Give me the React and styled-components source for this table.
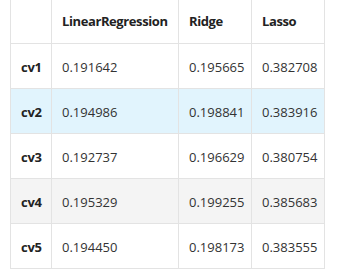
import React from 'react';
import styled, { createGlobalStyle } from 'styled-components';

const GlobalStyle = createGlobalStyle`
    html, body {
        margin: 0;
        padding: 0;
        background: #ffffff;
    }
    body {
        font-family: "Open Sans", "Noto Sans", sans-serif;
        color: #333333;
    }
`;

const columns = ['LinearRegression', 'Ridge', 'Lasso'];

const rows = [
    { name: 'cv1', values: ['0.191642', '0.195665', '0.382708'] },
    { name: 'cv2', values: ['0.194986', '0.198841', '0.383916'], tone: 'hover' },
    { name: 'cv3', values: ['0.192737', '0.196629', '0.380754'] },
    { name: 'cv4', values: ['0.195329', '0.199255', '0.385683'], tone: 'striped' },
    { name: 'cv5', values: ['0.194450', '0.198173', '0.383555'] },
];

const toneColors = {
    hover: '#e1f4fd',
    striped: '#f4f4f4',
};

class App extends React.Component {
    render() {
        return (
            <Page>
                <GlobalStyle />
                <Table>
                    <colgroup>
                        <col style={{ width: 41 }} />
                        <col style={{ width: 127 }} />
                        <col style={{ width: 73 }} />
                        <col style={{ width: 73 }} />
                    </colgroup>
                    <thead>
                        <HeadRow>
                            <HeadCell />
                            {columns.map((c) => (
                                <HeadCell key={c}>{c}</HeadCell>
                            ))}
                        </HeadRow>
                    </thead>
                    <tbody>
                        {rows.map((r) => (
                            <BodyRow key={r.name} tone={r.tone}>
                                <RowHead>{r.name}</RowHead>
                                {r.values.map((v, i) => (
                                    <Cell key={i}>{v}</Cell>
                                ))}
                            </BodyRow>
                        ))}
                    </tbody>
                </Table>
            </Page>
        );
    }
}

const Page = styled.div`
    padding: 0 0 0 10px;
`;

const Table = styled.table`
    border-collapse: collapse;
    table-layout: fixed;
    width: 315px;
    font-size: 13px;
    line-height: 18px;
`;

const HeadRow = styled.tr`
    height: 43px;
`;

const HeadCell = styled.th`
    text-align: left;
    font-weight: 700;
    letter-spacing: -0.4px;
    padding: 0 10px;
    border-left: 1px solid #e3e3e3;
    border-right: 1px solid #e3e3e3;
    border-bottom: 1px solid #e3e3e3;
    color: #222222;
    white-space: nowrap;
`;

const BodyRow = styled.tr`
    height: 45px;
    background: ${(p) => toneColors[p.tone] || '#ffffff'};
`;

const RowHead = styled.th`
    text-align: left;
    font-weight: 700;
    letter-spacing: -0.3px;
    padding: 3px 10px 0 10px;
    border: 1px solid #e3e3e3;
    color: #222222;
`;

const Cell = styled.td`
    padding: 3px 10px 0 10px;
    border: 1px solid #e3e3e3;
    white-space: nowrap;
`;

export default App;
